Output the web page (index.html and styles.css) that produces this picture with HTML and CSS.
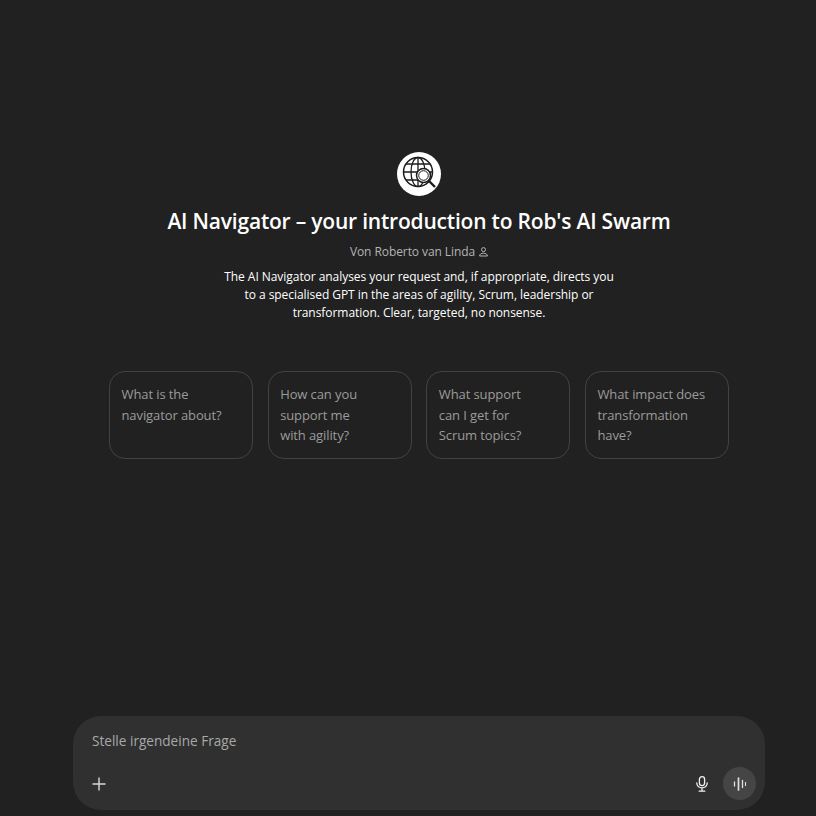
FILE: index.html
```html
<!DOCTYPE html>
<html lang="de">
<head>
    <meta charset="UTF-8">
    <meta name="viewport" content="width=device-width, initial-scale=1.0">
    <title>AI Navigator</title>
    <link rel="stylesheet" href="styles.css">
</head>
<body>
    <main class="page">
        <section class="intro">
            <div class="logo">
                <svg width="36" height="36" viewBox="0 0 36 36" fill="none" stroke="#1c1c1c" stroke-width="1.3">
                    <circle cx="17" cy="16" r="14.5" stroke-width="1.5"/>
                    <ellipse cx="17" cy="16" rx="7" ry="14.5"/>
                    <path d="M17 1.5V30.5M2.5 16H31.5M5 8H29M5 24H29"/>
                    <circle cx="22.5" cy="19.5" r="7" fill="#fff" stroke-width="1.5"/>
                    <circle cx="22.5" cy="19.5" r="4.8" fill="#fff" stroke-width="1"/>
                    <path d="M28 25L34 31" stroke-width="2.4"/>
                </svg>
            </div>
            <h1>AI Navigator – your introduction to Rob's AI Swarm</h1>
            <div class="author">
                <span>Von Roberto van Linda</span>
                <svg width="9" height="10" viewBox="0 0 9 10" fill="none" stroke="#c4c4c4" stroke-width="0.9">
                    <circle cx="4.5" cy="2.6" r="2"/>
                    <path d="M.6 9C.8 7 2.4 6.2 4.5 6.2S8.2 7 8.4 9Z"/>
                </svg>
            </div>
            <p class="description">The AI Navigator analyses your request and, if appropriate, directs you<br>to a specialised GPT in the areas of agility, Scrum, leadership or<br>transformation. Clear, targeted, no nonsense.</p>
        </section>

        <section class="starters">
            <div class="starter">What is the navigator about?</div>
            <div class="starter">How can you support me with agility?</div>
            <div class="starter">What support can I get for Scrum topics?</div>
            <div class="starter">What impact does transformation have?</div>
        </section>

        <form class="composer">
            <div class="placeholder">Stelle irgendeine Frage</div>
            <div class="composer-actions">
                <svg class="plus" width="14" height="14" viewBox="0 0 14 14" stroke="#d8d8d8" stroke-width="1.4">
                    <path d="M7 .5V13.5M.5 7H13.5"/>
                </svg>
                <div class="composer-right">
                    <svg width="12" height="16" viewBox="0 0 12 16" fill="none" stroke="#f0f0f0" stroke-width="1.3" stroke-linecap="round">
                        <rect x="3.4" y=".7" width="5.2" height="9" rx="2.6"/>
                        <path d="M.8 7C.8 10 3 11.8 6 11.8S11.2 10 11.2 7M6 11.8V15.2M3.2 15.2H8.8"/>
                    </svg>
                    <div class="voice">
                        <svg width="14" height="14" viewBox="0 0 14 14" stroke="#e0e0e0" stroke-linecap="round">
                            <path d="M1.5 5V9" stroke-width="1.3"/>
                            <path d="M5.5 1V13" stroke-width="1.7"/>
                            <path d="M9.5 3.5V10.5" stroke-width="1.3"/>
                            <path d="M12.5 5.5V8.5" stroke-width="1.1"/>
                        </svg>
                    </div>
                </div>
            </div>
        </form>
    </main>
</body>
</html>
```

FILE: styles.css
```css
body {
    font-family: "Open Sans", "Noto Sans", sans-serif;
    background-color: #212121;
    color: #fff;
    margin: 0;
}
.page {
    display: flex;
    flex-direction: column;
    align-items: center;
    height: 816px;
    box-sizing: border-box;
    padding: 152px 0 6px 22px;
}
.intro {
    display: flex;
    flex-direction: column;
    align-items: center;
}
.logo {
    width: 44px;
    height: 44px;
    border-radius: 50%;
    background: #fff;
    display: flex;
    align-items: center;
    justify-content: center;
}
h1 {
    font-size: 21px;
    line-height: 28px;
    font-weight: 600;
    margin: 11px 0 0;
    letter-spacing: -0.2px;
}
.author {
    display: flex;
    align-items: center;
    gap: 4px;
    margin-top: 7px;
    font-size: 12px;
    line-height: 20px;
    color: #b4b4b4;
    letter-spacing: -0.08px;
}
.description {
    margin: 6px 0 0;
    font-size: 12px;
    line-height: 18px;
    text-align: center;
    letter-spacing: -0.05px;
}
.starters {
    display: flex;
    gap: 14.6px;
    margin-top: 49px;
    width: 620px;
}
.starter {
    flex: 1;
    height: 88px;
    box-sizing: border-box;
    padding: 12px 12px 12px 11.5px;
    border: 1px solid #424242;
    border-radius: 16px;
    color: #9b9b9b;
    font-size: 13px;
    line-height: 20.5px;
    letter-spacing: -0.1px;
    text-wrap: balance;
}
.composer {
    margin-top: auto;
    width: 692px;
    height: 94px;
    box-sizing: border-box;
    padding: 15px 9px 10px 19px;
    background: #303030;
    border-radius: 28px;
    display: flex;
    flex-direction: column;
    justify-content: space-between;
}
.placeholder {
    font-size: 13.6px;
    line-height: 20px;
    color: #a8a8a8;
}
.composer-actions {
    display: flex;
    align-items: center;
    justify-content: space-between;
}
.composer-right {
    display: flex;
    align-items: center;
    gap: 15px;
}
.voice {
    width: 33px;
    height: 33px;
    border-radius: 50%;
    background: #454545;
    display: flex;
    align-items: center;
    justify-content: center;
}
```
